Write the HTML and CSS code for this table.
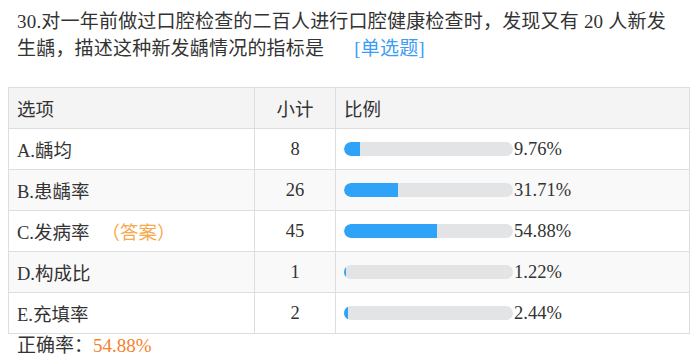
FILE: index.html
```html
<!DOCTYPE html>
<html lang="zh-CN">
<head>
<meta charset="utf-8">
<title>第30题</title>
<link rel="stylesheet" href="styles.css">
</head>
<body>
<div class="question">
  <div class="title"><span class="qtext">30.对一年前做过口腔检查的二百人进行口腔健康检查时，发现又有 20 人新发</span><span class="qtext">生龋，描述这种新发龋情况的指标是</span><span class="qtype">[单选题]</span></div>
  <table class="stats">
    <colgroup><col class="w-opt"><col class="w-num"><col class="w-pct"></colgroup>
    <thead>
      <tr><th>选项</th><th class="c-num">小计</th><th>比例</th></tr>
    </thead>
    <tbody>
      <tr><td>A.龋均</td><td class="c-num">8</td><td><div class="bar-wrap"><div class="bar"><div class="fill" style="width:9.76%"></div></div><span class="pct">9.76%</span></div></td></tr>
      <tr class="alt"><td>B.患龋率</td><td class="c-num">26</td><td><div class="bar-wrap"><div class="bar"><div class="fill" style="width:31.71%"></div></div><span class="pct">31.71%</span></div></td></tr>
      <tr><td>C.发病率<span class="answer">（答案）</span></td><td class="c-num">45</td><td><div class="bar-wrap"><div class="bar"><div class="fill" style="width:54.88%"></div></div><span class="pct">54.88%</span></div></td></tr>
      <tr class="alt"><td>D.构成比</td><td class="c-num">1</td><td><div class="bar-wrap"><div class="bar"><div class="fill" style="width:1.22%"></div></div><span class="pct">1.22%</span></div></td></tr>
      <tr><td>E.充填率</td><td class="c-num">2</td><td><div class="bar-wrap"><div class="bar"><div class="fill" style="width:2.44%"></div></div><span class="pct">2.44%</span></div></td></tr>
    </tbody>
  </table>
  <div class="correct">正确率：<span class="rate">54.88%</span></div>
</div>
</body>
</html>
```
FILE: styles.css
```css
html, body {
  margin: 0;
  padding: 0;
  background: #fff;
}
body {
  padding: 8px;
  font-family: "Liberation Serif", "Noto Sans CJK SC", serif;
  color: #333;
}
.question {
  width: 682px;
}
.title {
  font-size: 19px;
  line-height: 27px;
  padding: 0 10px 0 9px;
  letter-spacing: 0.2px;
}
.qtype {
  color: #3d9cf5;
  margin-left: 30px;
}
.stats {
  margin-top: 25px;
  width: 682px;
  border-collapse: collapse;
  table-layout: fixed;
  font-size: 18.5px;
}
.w-opt { width: 246px; }
.w-num { width: 81px; }
.stats th, .stats td {
  border: 1px solid #dedede;
  height: 40px;
  padding: 0 8px;
  font-weight: normal;
  text-align: left;
  vertical-align: middle;
}
.stats thead tr {
  background: #f4f4f4;
}
.stats tr.alt {
  background: #f9f9f9;
}
.stats .c-num { text-align: center; }
.bar-wrap {
  display: flex;
  align-items: center;
}
.bar {
  width: 169px;
  height: 14px;
  border-radius: 7px;
  background: #e3e4e6;
  overflow: hidden;
  flex: none;
}
.fill {
  height: 100%;
  background: #2ea3f7;
  border-radius: 7px 0 0 7px;
}
.pct {
  margin-left: 1px;
}
.answer {
  color: #f7a94e;
  margin-left: 12px;
}
.correct {
  font-size: 19px;
  line-height: 24px;
  padding-left: 9px;
}
.rate {
  color: #f5832c;
}
```
